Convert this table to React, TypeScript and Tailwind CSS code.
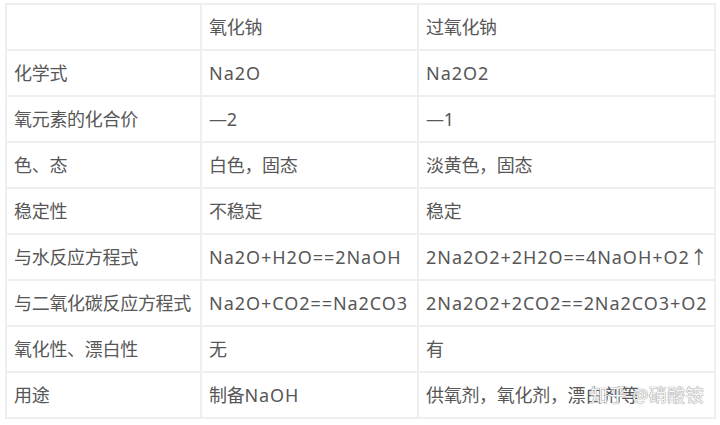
import React from "react";

const rows: [string, string, string][] = [
  ["", "氧化钠", "过氧化钠"],
  ["化学式", "Na2O", "Na2O2"],
  ["氧元素的化合价", "—2", "—1"],
  ["色、态", "白色，固态", "淡黄色，固态"],
  ["稳定性", "不稳定", "稳定"],
  ["与水反应方程式", "Na2O+H2O==2NaOH", "2Na2O2+2H2O==4NaOH+O2↑"],
  ["与二氧化碳反应方程式", "Na2O+CO2==Na2CO3", "2Na2O2+2CO2==2Na2CO3+O2"],
  ["氧化性、漂白性", "无", "有"],
  ["用途", "制备NaOH", "供氧剂，氧化剂，漂白剂等"],
];

function Runs({ text }: { text: string }) {
  const parts = text.match(/[A-Za-z0-9+=↑]+|[^A-Za-z0-9+=↑]+/g) || [];
  return (
    <>
      {parts.map((p, i) =>
        /[A-Za-z0-9+=↑]/.test(p) ? (
          <span key={i} className="tracking-[0.95px]">
            {p}
          </span>
        ) : (
          <span key={i} className="tracking-[-0.3px]">
            {p}
          </span>
        )
      )}
    </>
  );
}

export default function App() {
  return (
    <div
      className="relative w-[720px] h-[425px] bg-white overflow-hidden"
      style={{ fontFamily: '"Noto Sans", "Noto Sans CJK SC", sans-serif' }}
    >
      <div className="absolute left-[5px] top-[3px] w-[711px]">
        <table className="w-full border-collapse text-[18px] text-[#575757]">
          <colgroup>
            <col className="w-[195px]" />
            <col className="w-[217px]" />
            <col />
          </colgroup>
          <tbody>
            {rows.map((r, i) => (
              <tr key={i} className="h-[46px]">
                {r.map((c, j) => (
                  <td
                    key={j}
                    className="border-2 border-[#efefef] pl-[7px] pr-0 py-0 whitespace-nowrap"
                  >
                    <Runs text={c} />
                  </td>
                ))}
              </tr>
            ))}
          </tbody>
        </table>
      </div>
      <div
        className="absolute left-[590px] top-[382px] text-[18px] text-[#f6f6f6] tracking-[0.5px]"
        style={{ textShadow: "0 0 1px #8a8a8a, 0 0 1px #8a8a8a" }}
      >
        知乎 @硝酸铵
      </div>
    </div>
  );
}
